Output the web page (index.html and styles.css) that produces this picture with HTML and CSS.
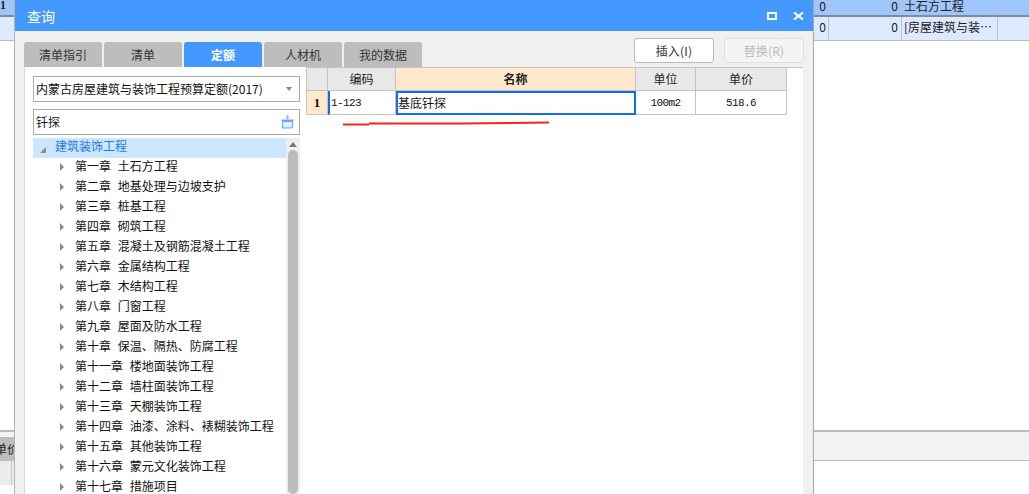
FILE: index.html
```html
<!DOCTYPE html>
<html lang="zh">
<head>
<meta charset="utf-8">
<title>查询</title>
<link rel="stylesheet" href="styles.css">
</head>
<body>
<div class="app">
  <div class="grid-row row-selected">
    <div class="cell-first">1</div>
    <div class="filler"></div>
    <div class="cell-a">0</div>
    <div class="cell-b">0</div>
    <div class="cell-c">土石方工程</div>
    <div class="cell-d"></div>
  </div>
  <div class="grid-row row-light">
    <div class="cell-first"></div>
    <div class="filler"></div>
    <div class="cell-a">0</div>
    <div class="cell-b">0</div>
    <div class="cell-c">[房屋建筑与装…</div>
    <div class="cell-d"></div>
  </div>
  <div class="main-space"></div>
  <div class="bottom-head"><div class="bottom-label"><span>单价</span></div></div>
  <div class="bottom-body"><div class="bottom-col"></div></div>
</div>

<section class="dialog">
  <header class="title-bar">
    <h1 class="title">查询</h1>
    <div class="win-buttons">
      <span class="win-restore"></span>
      <svg class="win-close" width="11" height="8" viewBox="0 0 11 8"><path d="M1 .5 10 7.500M10 .5 1 7.500" stroke="#fff" stroke-width="2.200" fill="none"/></svg>
    </div>
  </header>
  <div class="toolbar">
    <nav class="tabs">
      <span class="tab">清单指引</span>
      <span class="tab">清单</span>
      <span class="tab tab-active">定额</span>
      <span class="tab">人材机</span>
      <span class="tab">我的数据</span>
    </nav>
    <div class="actions">
      <button class="btn">插入(I)</button>
      <button class="btn btn-disabled">替换(R)</button>
    </div>
  </div>
  <div class="content">
    <aside class="left-panel">
      <div class="select">
        <span>内蒙古房屋建筑与装饰工程预算定额(2017)</span>
        <i class="select-arrow"></i>
      </div>
      <div class="search">
        <span>钎探</span>
        <svg class="search-icon" width="13" height="14" viewBox="0 0 13 14"><path d="M5.500 0h2v4h-2z" fill="#8bbcf2"/><path d="M.5 4.500h12v2H.5z" fill="#6caaf0"/><path d="M1.500 6.500h10v6.500h-10z" fill="#dbeafc" stroke="#6caaf0"/><path d="M3.500 9.500h6" stroke="#fff" stroke-width="2"/></svg>
      </div>
      <div class="tree-wrap">
        <ul class="tree">
          <li class="node node-root"><i class="arrow-open"></i><span>建筑装饰工程</span></li>
          <li class="node"><i class="arrow-closed"></i><span>第一章 土石方工程</span></li>
          <li class="node"><i class="arrow-closed"></i><span>第二章 地基处理与边坡支护</span></li>
          <li class="node"><i class="arrow-closed"></i><span>第三章 桩基工程</span></li>
          <li class="node"><i class="arrow-closed"></i><span>第四章 砌筑工程</span></li>
          <li class="node"><i class="arrow-closed"></i><span>第五章 混凝土及钢筋混凝土工程</span></li>
          <li class="node"><i class="arrow-closed"></i><span>第六章 金属结构工程</span></li>
          <li class="node"><i class="arrow-closed"></i><span>第七章 木结构工程</span></li>
          <li class="node"><i class="arrow-closed"></i><span>第八章 门窗工程</span></li>
          <li class="node"><i class="arrow-closed"></i><span>第九章 屋面及防水工程</span></li>
          <li class="node"><i class="arrow-closed"></i><span>第十章 保温、隔热、防腐工程</span></li>
          <li class="node"><i class="arrow-closed"></i><span>第十一章 楼地面装饰工程</span></li>
          <li class="node"><i class="arrow-closed"></i><span>第十二章 墙柱面装饰工程</span></li>
          <li class="node"><i class="arrow-closed"></i><span>第十三章 天棚装饰工程</span></li>
          <li class="node"><i class="arrow-closed"></i><span>第十四章 油漆、涂料、裱糊装饰工程</span></li>
          <li class="node"><i class="arrow-closed"></i><span>第十五章 其他装饰工程</span></li>
          <li class="node"><i class="arrow-closed"></i><span>第十六章 蒙元文化装饰工程</span></li>
          <li class="node"><i class="arrow-closed"></i><span>第十七章 措施项目</span></li>
        </ul>
        <div class="scrollbar">
          <i class="scroll-up"></i>
          <div class="scroll-thumb"></div>
        </div>
      </div>
    </aside>
    <main class="right-panel">
      <div class="table">
        <div class="th th-num"></div>
        <div class="th">编码</div>
        <div class="th th-active">名称</div>
        <div class="th">单位</div>
        <div class="th">单价</div>
        <div class="td td-num">1</div>
        <div class="td td-code">1-123</div>
        <div class="td td-name">基底钎探</div>
        <div class="td td-latin">100m2</div>
        <div class="td td-latin">518.6</div>
      </div>
    </main>
  </div>
  <svg class="annotation" width="210" height="8" viewBox="0 0 210 8"><path d="M0 5.500H26M26 4.500H120L206 3.500" stroke="#f5231a" stroke-width="2" fill="none"/></svg>
</section>
</body>
</html>
```

FILE: styles.css
```css
* { box-sizing: border-box; }
html, body { margin: 0; padding: 0; height: 100%; }
body {
  width: 1029px;
  height: 494px;
  overflow: hidden;
  position: relative;
  background: #fff;
  color: #222;
  font: 12px/20px "Noto Sans CJK SC", "Liberation Sans", sans-serif;
}

/* background application */
.app { display: flex; flex-direction: column; height: 494px; }
.grid-row { display: flex; flex: none; }
.row-selected { height: 17px; background: #9fc6fb; border-bottom: 2px solid #7f8b9b; line-height: 11px; }
.row-light { height: 24px; background: #dde9fd; border-bottom: 1px solid #b9bec5; }
.cell-first { width: 14px; font-family: "Liberation Serif", serif; font-weight: bold; }
.filler { flex: 1; }
.cell-a { width: 15px; padding-left: 3px; text-align: center; border-right: 1px solid #b8c4d4; }
.cell-b { width: 73px; padding-right: 3px; text-align: right; border-right: 1px solid #b8c4d4; }
.cell-c { width: 96px; padding-left: 2px; border-right: 1px solid #b8c4d4; white-space: nowrap; }
.cell-d { width: 31px; }
.main-space { flex: 1; }
.bottom-head {
  flex: none;
  height: 31px;
  background: #f3f3f3;
  border-top: 2px solid #bbb;
  border-bottom: 1px solid #bbb;
  padding-top: 5px;
}
.bottom-label {
  width: 14px;
  height: 23px;
  background: #bdbdbd;
  overflow: hidden;
  white-space: nowrap;
  line-height: 23px;
}
.bottom-label span { display: block; margin-left: -5px; }
.bottom-body { flex: none; height: 33px; }
.bottom-col { width: 14px; height: 24px; background: #ececec; border-left: 1px solid #ececec; }
.bottom-col::before { content: ""; display: block; width: 10px; height: 24px; border-right: 1px solid #c8c8c8; }

/* dialog */
.dialog {
  position: absolute;
  left: 14px;
  top: 0;
  width: 800px;
  height: 494px;
  display: flex;
  flex-direction: column;
  background: #f0f0f0;
  border-left: 1px solid #b4b4b4;
  border-right: 1px solid #a6a6a6;
  overflow: hidden;
}
.title-bar {
  flex: none;
  height: 31px;
  display: flex;
  align-items: center;
  justify-content: space-between;
  background: #4499ff;
  padding: 0 9px 0 12px;
  color: #fff;
}
.title { margin: 0; font-size: 14px; font-weight: normal; }
.win-buttons { display: flex; align-items: center; gap: 16px; }
.win-restore { display: block; width: 10px; height: 8px; border: 2px solid #fff; }
.win-close { display: block; }

.toolbar { flex: none; height: 36px; display: flex; justify-content: space-between; padding: 0 9px; }
.tabs { display: flex; gap: 2px; align-items: flex-end; }
.tab {
  width: 78px;
  height: 25px;
  line-height: 25px;
  text-align: center;
  background: #bdbdbd;
  border-radius: 3px 3px 0 0;
  color: #333;
}
.tab-active { background: #4499ff; color: #fff; font-weight: bold; }
.actions { display: flex; gap: 10px; padding-top: 7px; }
.btn {
  width: 80px;
  height: 25px;
  padding: 0;
  background: #fff;
  border: 1px solid #b9b9b9;
  border-radius: 3px;
  color: #333;
  font: inherit;
  line-height: 23px;
  letter-spacing: .2px;
}
.btn-disabled { background: #f4f4f4; border-color: #e0e0e0; color: #bbb; }

.content { flex: 1; min-height: 0; display: flex; padding: 0 10px 0 9px; }
.left-panel {
  flex: none;
  width: 282px;
  display: flex;
  flex-direction: column;
  background: #fff;
  border-left: 1px solid #d8d8d8;
  padding: 9px 6px 0 8px;
}
.select, .search {
  flex: none;
  display: flex;
  align-items: center;
  justify-content: space-between;
  background: #fff;
  border: 1px solid #aaa;
  color: #111;
  white-space: nowrap;
}
.select { height: 26px; padding: 0 7px 0 2px; }
.select-arrow { width: 0; height: 0; border: 3.5px solid transparent; border-top: 4px solid #888; border-bottom: 0; }
.search { height: 26px; margin-top: 7px; padding: 0 5px 0 2px; }
.search-icon { display: block; }

.tree-wrap { flex: 1; min-height: 0; display: flex; margin-top: 3px; overflow: hidden; }
.tree { flex: 1; margin: 0; padding: 0; list-style: none; }
.node {
  height: 20px;
  display: flex;
  align-items: center;
  padding: 0 0 4px 27px;
  color: #111;
  white-space: nowrap;
}
.node span { margin-left: 11px; word-spacing: 4px; }
.node-root { padding-left: 7px; background: #cce6ff; color: #1a7be6; }
.node-root span { margin-left: 9px; }
.arrow-closed { flex: none; width: 0; height: 0; margin-top: 2px; border: 4px solid transparent; border-left: 4px solid #8a8a8a; border-right: 0; }
.arrow-open { flex: none; width: 0; height: 0; margin-top: 7px; border-bottom: 6px solid #8a8a8a; border-left: 6px solid transparent; }
.scrollbar { flex: none; width: 14px; background: #eee; position: relative; padding: 12px 2px 0; }
.scroll-up { position: absolute; left: 3px; top: 4px; width: 0; height: 0; border: 4px solid transparent; border-bottom: 5px solid #777; border-top: 0; }
.scroll-thumb { height: 344px; background: #bcbcbc; border-radius: 5px; }

.right-panel { flex: 1; background: #fff; border-top: 1px solid #c4c4c4; }
.table {
  display: grid;
  grid-template-columns: 22px 68px 240px 60px 91px;
  grid-template-rows: 23px 24px;
  width: 481px;
}
.th, .td {
  display: flex;
  align-items: center;
  justify-content: center;
  border-right: 1px solid #c4c4c4;
  border-bottom: 1px solid #c4c4c4;
}
.th { background: #e8e8e8; color: #222; }
.th-num { border-left: 1px solid #c4c4c4; }
.th-active { background: #ffe8cc; font-weight: bold; }
.td { background: #fff; color: #111; }
.td-num { background: #ffe8cc; border-left: 1px solid #c4c4c4; font: bold 13px "Liberation Serif", serif; }
.td-code { justify-content: flex-start; padding-left: 1px; border-left: 2px solid #0f6fe8; font: 11px "Liberation Mono", monospace; letter-spacing: -.6px; }
.td-name { justify-content: flex-start; border: 2px solid #0f6fe8; font-size: 12px; }
.td-latin { font: 11px "Liberation Mono", monospace; letter-spacing: -.6px; }

.annotation { position: absolute; left: 328px; top: 119px; }
```
